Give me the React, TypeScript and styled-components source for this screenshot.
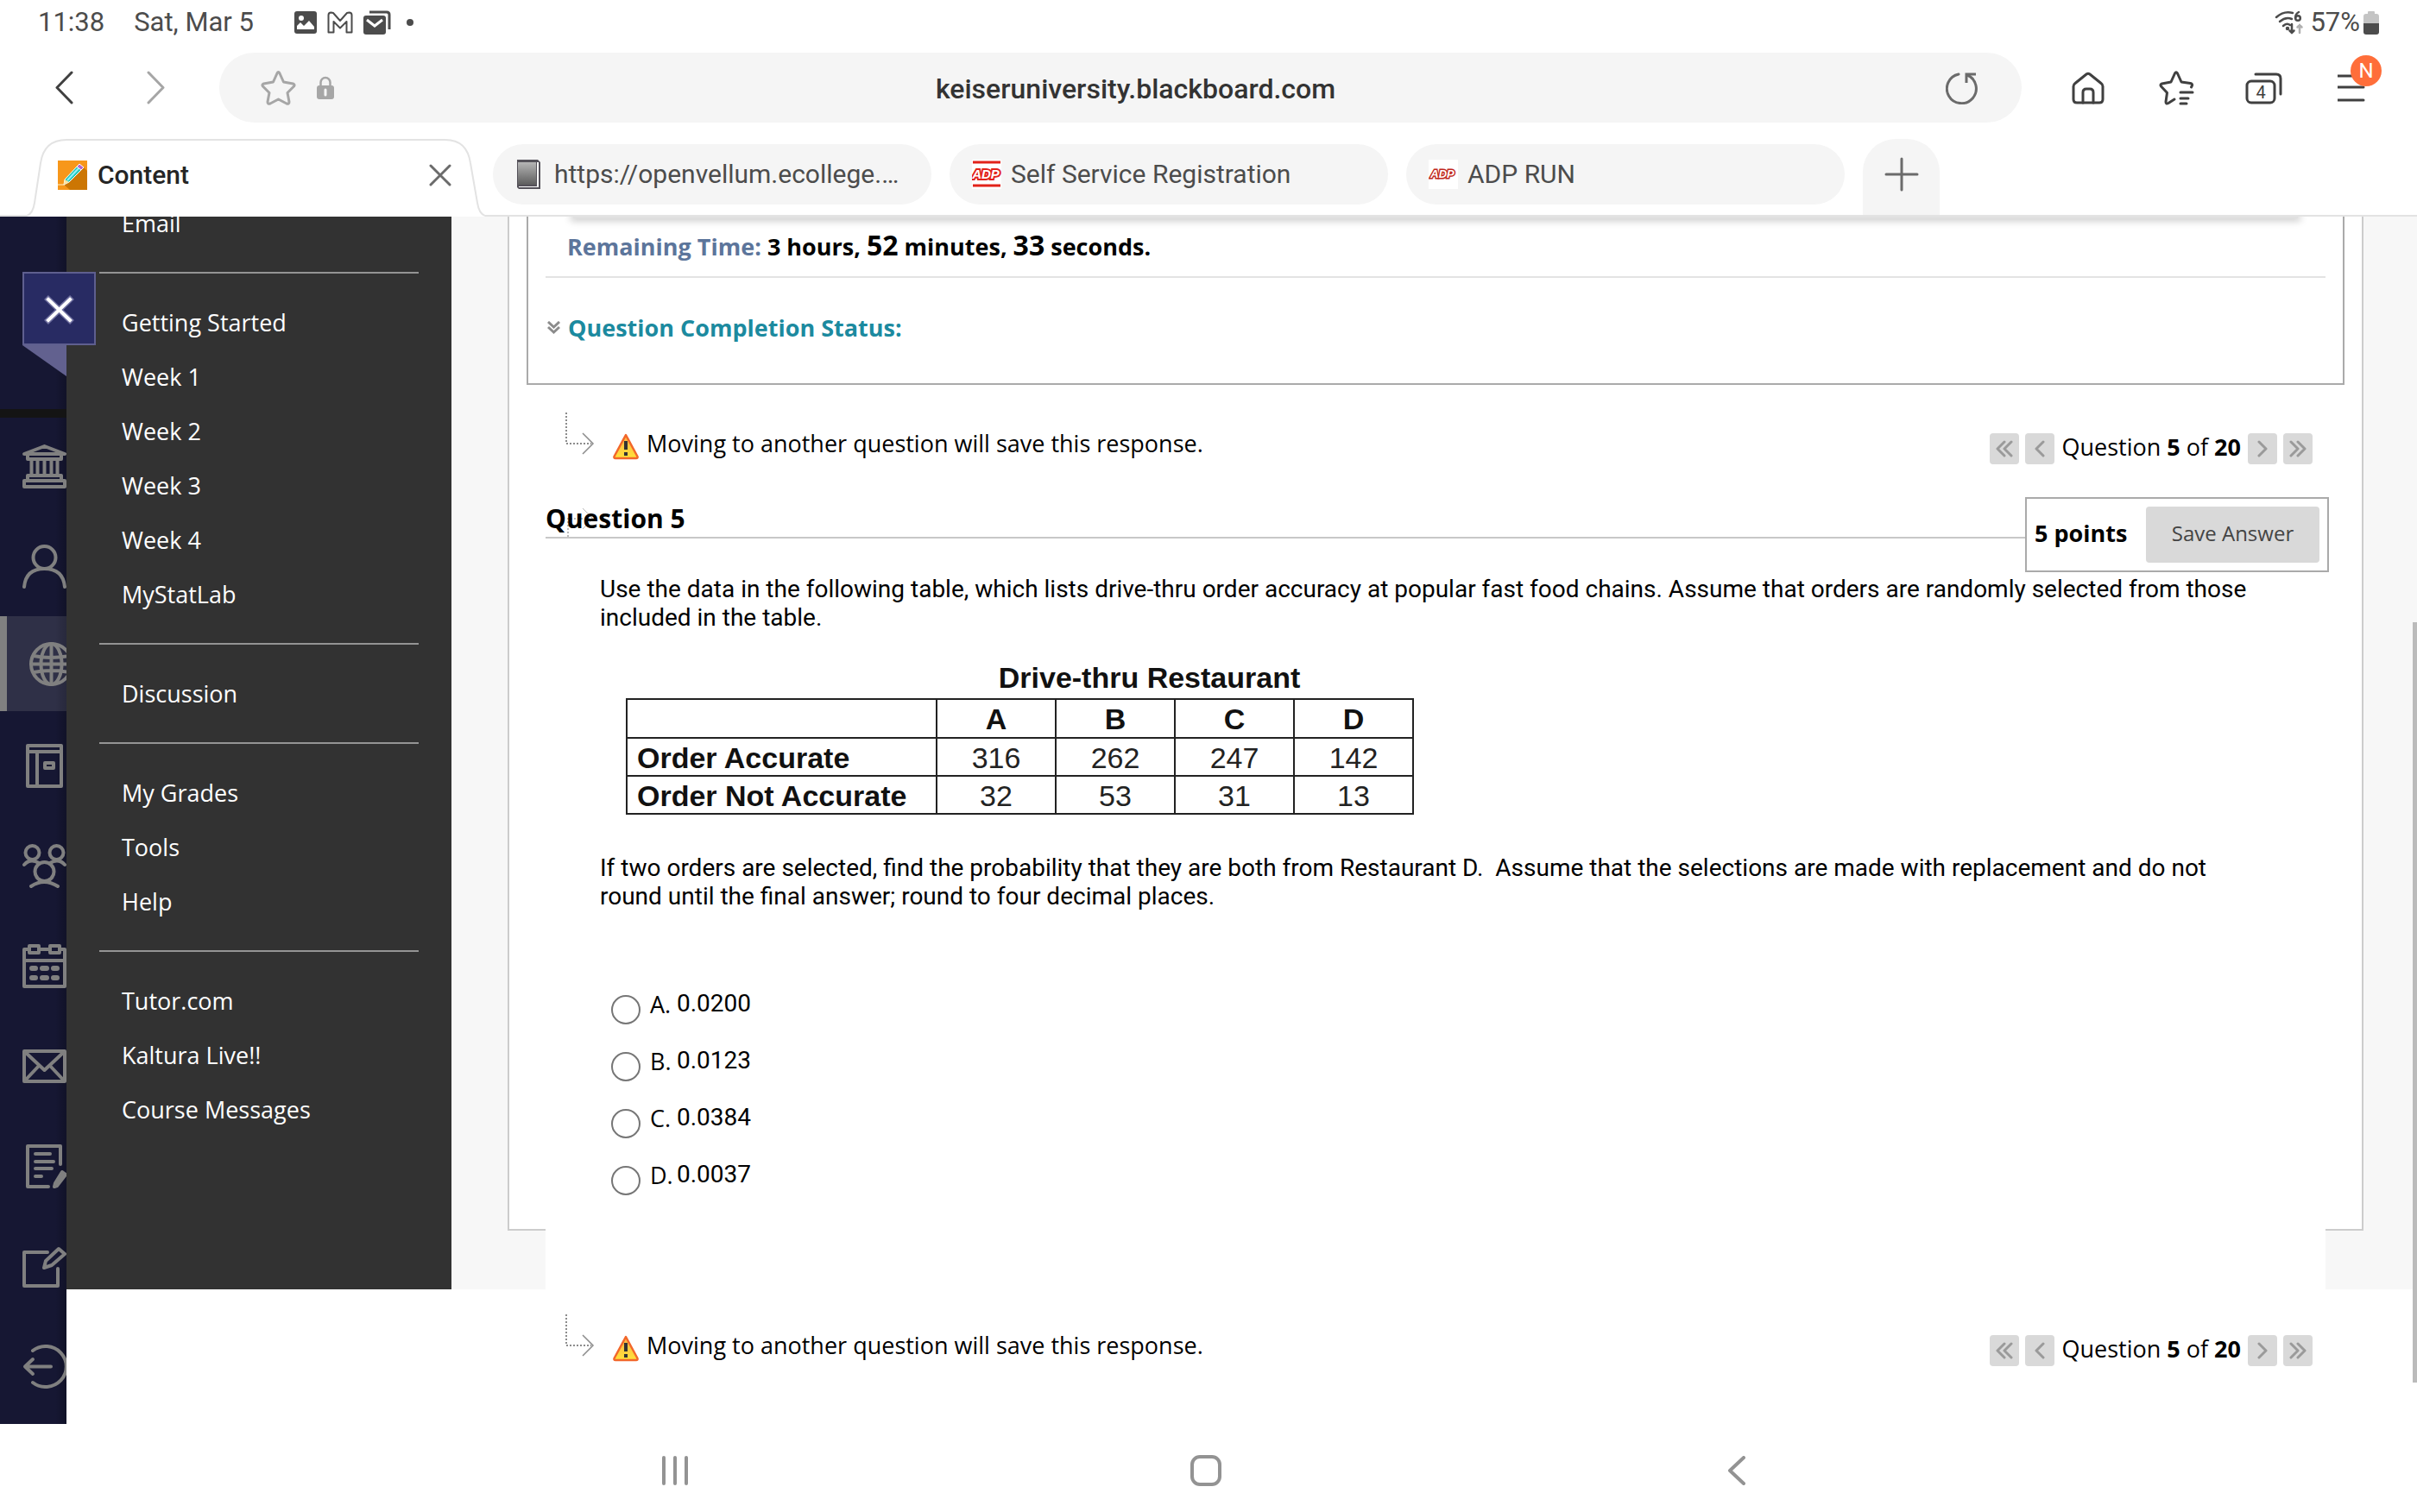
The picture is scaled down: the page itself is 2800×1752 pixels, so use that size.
import React from "react";
import styled, { createGlobalStyle, css } from "styled-components";

const GlobalStyle = createGlobalStyle`
  *, *::before, *::after { box-sizing: border-box; }
  body { margin: 0; background: #fff; color: #000; font-family: "Open Sans", "Noto Sans", sans-serif; }
  button, input { font: inherit; color: inherit; }
  button { border: 0; padding: 0; background: none; }
  a { color: inherit; text-decoration: none; }
  svg { display: block; flex: none; }
`;

const Screen = styled.div`
  display: flex;
  flex-direction: column;
  min-height: 100vh;
  overflow: hidden;
`;

/* ---------- Browser chrome ---------- */

const StatusBar = styled.header`
  display: flex;
  align-items: center;
  justify-content: space-between;
  height: 52px;
  padding: 0 44px;
  color: #4c4c4c;
  font: 400 31px/36px Roboto, sans-serif;
`;

const StatusGroup = styled.div<{ $gap: number }>`
  display: flex;
  align-items: center;
  gap: ${(p) => p.$gap}px;
`;

const StatusDate = styled.span`
  margin: 0 35px 0 22px;
`;

const Toolbar = styled.div`
  display: flex;
  align-items: center;
  padding: 9px 24px 0 21px;
  color: #404040;
`;

const ToolButton = styled.button<{ $width: number; $muted?: boolean }>`
  display: flex;
  align-items: center;
  justify-content: center;
  width: ${(p) => p.$width}px;
  height: 80px;
  color: ${(p) => (p.$muted ? "#a6a6a6" : "#404040")};
`;

const MenuGlyph = styled.span`
  position: relative;
`;

const Badge = styled.span`
  position: absolute;
  top: -22px;
  left: 15px;
  width: 36px;
  height: 36px;
  border-radius: 50%;
  background: #ff6e3a;
  color: #fff;
  font: 400 24px/36px Roboto, sans-serif;
  text-align: center;
`;

const AddressBar = styled.div`
  display: flex;
  flex: 1;
  align-items: center;
  height: 81px;
  margin: 0 26px 0 21px;
  padding: 0 50px 0 48px;
  border-radius: 41px;
  background: #f5f5f5;
  color: #a6a6a6;
`;

const IconButton = styled.button`
  display: flex;
  color: inherit;
`;

const LockMark = styled.span`
  margin-left: 24px;
`;

const AddressInput = styled.input`
  flex: 1;
  min-width: 0;
  margin: 0 10px 0 0;
  padding: 3px 0 0;
  border: 0;
  outline: 0;
  background: none;
  color: #333;
  font: 500 32px/36px Roboto, sans-serif;
  text-align: center;
`;

const ReloadButton = styled(IconButton)`
  color: #6b6b6b;
`;

const TabStrip = styled.div`
  display: flex;
  align-items: flex-end;
  padding: 19px 0 0 31px;
  border-bottom: 2px solid #e3e3e3;
  font: 400 30px/36px Roboto, sans-serif;
`;

const ActiveTab = styled.div`
  position: relative;
  display: flex;
  flex: 0 1 531px;
  align-items: center;
  gap: 13px;
  height: 90px;
  margin-bottom: -2px;
  padding: 0 39px 6px 36px;
  color: #252525;
  font-weight: 500;
`;

const TabOutline = styled.svg`
  position: absolute;
  inset: 0;
  width: 100%;
  height: 100%;
`;

const TabFace = styled.span`
  position: relative;
  display: flex;
  flex: 1;
  align-items: center;
  gap: 12px;
`;

const TabClose = styled(IconButton)`
  position: relative;
  color: #6b6b6b;
`;

const Tab = styled.button`
  display: flex;
  flex: 0 1 508px;
  align-items: center;
  gap: 11px;
  height: 70px;
  margin: 0 12px 12px 9px;
  padding: 0 26px;
  border-radius: 35px;
  background: #f5f5f5;
  color: #4c4c4c;
`;

const TabText = styled.span`
  white-space: nowrap;
`;

const NewTab = styled.button`
  display: flex;
  align-items: center;
  justify-content: center;
  width: 89px;
  height: 88px;
  margin-left: 9px;
  padding-bottom: 6px;
  border-radius: 38px 38px 0 0;
  background: #f5f5f5;
`;

/* ---------- Page ---------- */

const Viewport = styled.div`
  position: relative;
  display: flex;
  overflow: hidden;
`;

const Rail = styled.nav`
  display: flex;
  flex: none;
  flex-direction: column;
  width: 77px;
  overflow: hidden;
  background: linear-gradient(to right, transparent 64px, rgba(0, 0, 0, 0.22)), #161733;
  color: #808080;
`;

const RailHead = styled.div`
  flex: none;
  height: 233px;
  margin-bottom: -2px;
  border-bottom: 10px solid #141414;
`;

const RailLink = styled.a<{ $active?: boolean }>`
  display: flex;
  flex: none;
  align-items: center;
  height: 116px;
  padding-left: 26px;
  ${(p) =>
    p.$active &&
    css`
      height: 110px;
      margin-bottom: 5px;
      border-left: 8px solid #808080;
      background: linear-gradient(to right, transparent 56px, rgba(0, 0, 0, 0.16)), #2f3047;
    `}
`;

const CloseFlag = styled.div`
  position: absolute;
  top: 64px;
  left: 26px;
  z-index: 2;
`;

const CloseCourse = styled.button`
  display: flex;
  align-items: center;
  justify-content: center;
  width: 85px;
  height: 85px;
  border: 2px solid #5f5f8f;
  background: #282b63;
`;

const Column = styled.div`
  flex: 1;
  min-width: 0;
`;

const Course = styled.div`
  display: flex;
`;

const CourseMenu = styled.nav`
  flex: none;
  width: 446px;
  padding: 0 38px;
  background: #323232;
  color: #fff;
`;

const MenuGroup = styled.ul<{ $scrolled?: boolean }>`
  margin: ${(p) => (p.$scrolled ? "-24px" : "0")} 0 0;
  padding: 25px 0 25px 26px;
  padding-top: ${(p) => (p.$scrolled ? "0" : "25px")};
  border-bottom: 2px solid #949494;
  list-style: none;
  &:last-child { border-bottom: 0; }
`;

const MenuLink = styled.a`
  display: block;
  font-size: 27px;
  line-height: 63px;
`;

const Main = styled.main`
  flex: 1;
  min-width: 0;
  padding: 0 62px 68px 65px;
  background: #f7f7f7;
`;

const Panel = styled.div`
  padding: 0 20px;
  border: 2px solid #ccc;
  border-top: 0;
  background: #fff;
`;

const TimerBox = styled.section`
  padding: 0 20px;
  border: 2px solid #aaa;
  border-top: 0;
  font-weight: 700;
  font-size: 27px;
`;

const ShadowEdge = styled.div`
  height: 2px;
  margin: 0 32px;
  background: #e0e0e0;
  box-shadow: 0 0 8px 3px rgba(0, 0, 0, 0.22);
`;

const TimerLine = styled.p`
  margin: 0;
  padding: 14px 0 15px 25px;
  border-bottom: 2px solid #e3e3e3;
  line-height: 38px;
`;

const TimerLabel = styled.span`
  color: #5c759b;
`;

const BigNumber = styled.span`
  font-size: 32px;
  line-height: 1;
`;

const StatusToggle = styled.button`
  display: flex;
  align-items: center;
  gap: 9px;
  margin: 39px 0 45px 2px;
  color: #1c8a9f;
  line-height: 38px;
`;

const Content = styled.div`
  position: relative;
  margin: 0 22px -70px;
  padding: 32px 0 93px;
  background: #fff;
`;

const SaveRow = styled.div`
  display: flex;
  align-items: flex-end;
  padding: 0 15px 0 23px;
  font-size: 27px;
`;

const WarnSlot = styled.span`
  margin: 0 8px 7px 20px;
`;

const WarnText = styled.p`
  flex: 1;
  margin: 0;
  line-height: 52px;
`;

const Pager = styled.div`
  display: flex;
  gap: 7px;
  margin-bottom: 2px;
  line-height: 32px;
`;

const PagerButton = styled.button`
  display: flex;
  align-items: center;
  justify-content: center;
  width: 34px;
  height: 36px;
  border-radius: 4px;
  background: #d9d9d9;
  color: #9a9a9a;
`;

const PagerText = styled.span`
  padding: 0 1px;
  white-space: nowrap;
`;

const QuestionHead = styled.div`
  position: relative;
  display: flex;
  align-items: flex-start;
  margin: 36px -4px 3px 0;
`;

const QuestionTitle = styled.h3`
  position: relative;
  flex: 1;
  height: 48px;
  margin: 0;
  padding-top: 4px;
  border-bottom: 2px solid #c8c8c8;
  font-weight: 700;
  font-size: 30px;
  line-height: 42px;
`;

const TitleElbow = styled.svg`
  position: absolute;
  top: 10px;
  left: 25px;
`;

const TitleText = styled.span`
  position: relative;
`;

const PointsBox = styled.div`
  display: flex;
  align-items: center;
  justify-content: space-between;
  width: 352px;
  height: 87px;
  padding: 0 9px;
  border: 2px solid #aaa;
  font-weight: 700;
  font-size: 27px;
`;

const Points = styled.span`
  padding-bottom: 4px;
`;

const SaveButton = styled.button`
  width: 201px;
  height: 65px;
  padding-bottom: 4px;
  border-radius: 4px;
  background: #d9d9d9;
  color: #444;
  font-weight: 400;
  font-size: 24px;
`;

const Body = styled.div`
  padding: 0 70px 0 63px;
  font: 400 28px/33px Roboto, sans-serif;
`;

const Paragraph = styled.p`
  margin: 0;
`;

const DataTable = styled.table`
  width: 913px;
  margin: 33px 0 45px 30px;
  border-collapse: collapse;
  table-layout: fixed;
  font: 400 34px/40px "Liberation Sans", Arial, sans-serif;
  color: #222;
`;

const Caption = styled.caption`
  padding: 0 0 4px 300px;
  color: #111;
  font-weight: 700;
`;

const LabelCol = styled.col`
  width: 359px;
`;

const Cell = styled.td`
  height: 44px;
  padding: 1px 0 0;
  border: 2px solid #222;
  text-align: center;
`;

const HeadCell = styled(Cell).attrs({ as: "th" })<{ $left?: boolean }>`
  padding-left: ${(p) => (p.$left ? "11px" : "0")};
  color: #111;
  text-align: ${(p) => (p.$left ? "left" : "center")};
  white-space: nowrap;
`;

const HeadRow = styled.tr`
  height: 45px;
`;

const Answers = styled.fieldset`
  margin: 82px 0 0;
  padding: 0 0 0 13px;
  border: 0;
`;

const Answer = styled.label`
  display: flex;
  align-items: flex-start;
  height: 66px;
`;

const Radio = styled.input`
  appearance: none;
  flex: none;
  width: 34px;
  height: 34px;
  margin: 16px 11px 0 0;
  border: 2px solid #767676;
  border-radius: 50%;
  background: #fff;
`;

const Letter = styled.span`
  width: 31px;
  padding-top: 11px;
  font: 400 27px/32px "Open Sans", sans-serif;
  white-space: nowrap;
`;

const Value = styled.span`
  padding-top: 10px;
  line-height: 32px;
`;

const FootRow = styled.div`
  padding: 29px 106px 65px 555px;
`;

const ScrollThumb = styled.div`
  position: absolute;
  top: 33.6%;
  right: 0;
  width: 5px;
  height: 63%;
  background: #bbb;
`;

const SystemNav = styled.nav`
  display: flex;
  flex: 1;
  align-items: center;
  justify-content: center;
  min-height: 102px;
  padding: 5px 6px 0 0;
`;

const SystemButton = styled.button`
  display: flex;
  justify-content: center;
  width: 22%;
  color: #939393;
`;

/* ---------- Icons ---------- */

type LineProps = { w: number; h: number; sw?: number; children: React.ReactNode };

const Line = ({ w, h, sw = 3, children }: LineProps) => (
  <svg width={w} height={h} viewBox={`0 0 ${w} ${h}`} fill="none" stroke="currentColor" strokeWidth={sw} strokeLinecap="round" strokeLinejoin="round" aria-hidden="true">
    {children}
  </svg>
);

const PictureIcon = () => (
  <svg width="26" height="26" viewBox="0 0 26 26" aria-hidden="true">
    <rect width="26" height="26" rx="3" fill="#4c4c4c" />
    <circle cx="8" cy="8" r="3" fill="#fff" />
    <path d="M3 21v-4l4-4 4 4 6-6 6 7v3z" fill="#fff" />
  </svg>
);

const GmailIcon = () => (
  <Line w={30} h={26} sw={2}>
    <path d="M1.500 4.500 Q1.500 1.500 4.500 1.500 L7 2 15 11 23 2 25.500 1.500 Q28.500 1.500 28.500 4.500 V24.500 H22.500 V12 L15 19.500 7.500 12 V24.500 H1.500 Z" />
  </Line>
);

const MailStackIcon = () => (
  <svg width="32" height="28" viewBox="0 0 32 28" aria-hidden="true">
    <path d="M7 2 H27 Q30 2 30 5 V22" fill="none" stroke="#4c4c4c" strokeWidth="3" />
    <rect y="6" width="26" height="22" rx="3" fill="#4c4c4c" />
    <path d="M4 11 L13 18 22 11" fill="none" stroke="#fff" strokeWidth="3" />
  </svg>
);

const DotIcon = () => (
  <svg width="14" height="8" viewBox="0 0 14 8" aria-hidden="true"><circle cx="10" cy="4" r="4" fill="#4c4c4c" /></svg>
);

const WifiIcon = () => (
  <svg width="34" height="28" viewBox="0 0 34 28" fill="none" stroke="#4c4c4c" strokeWidth="2.500" strokeLinecap="round" aria-hidden="true">
    <path d="M2 8 Q11 0 21 3" />
    <path d="M6 13 Q13 7 20 10" />
    <path d="M10 18 Q14 14 18 17" />
    <circle cx="15" cy="21" r="1" fill="#4c4c4c" />
    <path d="M28 2 Q24 4 24 9" />
    <circle cx="27" cy="9" r="2.800" />
    <path d="M20 16 V26 M17.500 23.500 L20 26 22.500 23.500" />
    <path d="M29 26 V17 M26.500 19.500 L29 17 31.500 19.500" stroke="#b0b0b0" />
  </svg>
);

const BatteryIcon = () => (
  <svg width="18" height="27" viewBox="0 0 18 27" aria-hidden="true">
    <path d="M5 1 Q5 0 6 0 H12 Q13 0 13 1 V3 H15 Q18 3 18 6 V15 H0 V6 Q0 3 3 3 H5 Z" fill="#c4c4c4" />
    <path d="M0 14 H18 V24 Q18 27 15 27 H3 Q0 27 0 24 Z" fill="#4c4c4c" />
  </svg>
);

const StarIcon = () => (
  <Line w={41} h={40}>
    <path d="M19 3 Q20.500 0 22 3 L26.500 13 37.500 15 Q40 16 38.500 18 L31 25.500 33 36 Q33 39 30 38 L20.500 33 11 38 Q8 39 8 36 L10 25.500 2.500 18 Q1 16 3.500 15 L14.500 13 Z" />
  </Line>
);

const LockIcon = () => (
  <svg width="20" height="27" viewBox="0 0 20 27" aria-hidden="true">
    <path d="M4.500 12 V7.500 a5.500 5.500 0 0 1 11 0 V12" fill="none" stroke="#a6a6a6" strokeWidth="2.500" />
    <rect y="11" width="20" height="16" rx="3" fill="#a6a6a6" />
    <path d="M10 16 V22" stroke="#f5f5f5" strokeWidth="3" strokeLinecap="round" />
  </svg>
);

const ReloadIcon = () => (
  <Line w={38} h={38}>
    <path d="M15 3 A17 17 0 1 0 25 4" />
    <path d="M35 3 H24 V13" strokeLinecap="butt" strokeLinejoin="miter" />
  </Line>
);

const HomeIcon = () => (
  <Line w={38} h={38}>
    <path d="M2 17 Q2 15 4 13.500 L17 3 Q19 1.500 21 3 L34 13.500 Q36 15 36 17 V32 Q36 36 32 36 H6 Q2 36 2 32 Z" />
    <path d="M13 36 V24 Q13 20 17 20 H21 Q25 20 25 24 V36" />
  </Line>
);

const StarListIcon = () => (
  <Line w={41} h={40}>
    <path d="M37.500 19 L38.500 17 Q39 15 36.500 14.500 L26 13 21.500 3 Q20 0.500 18.500 3 L14 13 3.500 15 Q1 16 2.500 18 L9.500 25.500 8 36 Q8 39 11 37.500 L18 33" />
    <path d="M25 25 H39 M25 32 H34 M25 38 H32" />
  </Line>
);

const TabsIcon = () => (
  <svg width="44" height="38" viewBox="0 0 44 38" fill="none" stroke="#404040" strokeWidth="3" strokeLinecap="round" aria-hidden="true">
    <rect x="2" y="11" width="32" height="25" rx="5" />
    <path d="M12 3 H36 Q41 3 41 8 V26" />
    <text x="18" y="31" fill="#404040" stroke="none" textAnchor="middle" fontFamily="Roboto, sans-serif" fontSize="20">4</text>
  </svg>
);

const MenuIcon = () => (
  <Line w={34} h={32}>
    <path d="M0 2 H30 M0 15 H30 M0 30 H30" />
  </Line>
);

const Chevron = ({ w, h, left, sw = 3 }: { w: number; h: number; left?: boolean; sw?: number }) => (
  <Line w={w} h={h} sw={sw}>
    <path d={left ? `M${w - 2} 2 L2 ${h / 2} ${w - 2} ${h - 2}` : `M2 2 L${w - 2} ${h / 2} 2 ${h - 2}`} />
  </Line>
);

const DoubleChevron = ({ left }: { left?: boolean }) => (
  <Line w={20} h={20} sw={3}>
    <path d={left ? "M10 2 L2 10 10 18 M18 2 L10 10 18 18" : "M2 2 L10 10 2 18 M10 2 L18 10 10 18"} />
  </Line>
);

const PencilFavicon = () => (
  <svg width="34" height="34" viewBox="0 0 34 34" aria-hidden="true">
    <rect width="34" height="34" fill="#f7971a" />
    <path d="M30 8 L34 12 V34 H14 L7 28 Z" fill="#cc7603" />
    <path d="M0 28 H8" stroke="#fff3c9" />
    <path d="M7 28 L8 22 23 6 28 10 13 25 Z" fill="#24c7b4" stroke="#fff" />
    <path d="M11 23 L25 8" stroke="#8ff0ff" strokeWidth="2" />
    <path d="M7 28 L8 22 13 25 Z" fill="#ffe3a1" />
    <path d="M22 7 L25 4 30 8 27 11 Z" fill="#b467c8" stroke="#fff" />
  </svg>
);

const BookFavicon = () => (
  <svg width="34" height="34" viewBox="0 0 34 34" aria-hidden="true">
    <defs>
      <linearGradient id="cover" x1="0" y1="0" x2="0" y2="1">
        <stop offset="0" stopColor="#b5b5b5" />
        <stop offset="1" stopColor="#5e5e5e" />
      </linearGradient>
    </defs>
    <path d="M2 0 H26 L29 3 V34 H4 L2 32 Z" fill="#55525a" />
    <path d="M4 31 H25 V3 H27 V32 H4 Z" fill="#fff" />
    <path d="M3 3 H24 V29 H3 Z" fill="url(#cover)" />
  </svg>
);

const AdpFavicon = ({ bars }: { bars?: boolean }) => (
  <svg width="34" height="34" viewBox="0 0 34 34" aria-hidden="true">
    <rect width="34" height="34" fill="#fff" />
    {bars && <path d="M1 3 H33 M1 30 H33" stroke="#e2231a" strokeWidth="3" />}
    <text
      x="16"
      y={bars ? 22 : 21}
      textAnchor="middle"
      fontFamily="Liberation Sans, Arial, sans-serif"
      fontWeight="700"
      fontStyle="italic"
      fontSize={bars ? 15 : 13}
      fill="#fff"
      stroke={bars ? "#e2231a" : "#c0281c"}
      strokeWidth={bars ? 4 : 3}
      paintOrder="stroke"
    >
      ADP
    </text>
  </svg>
);

const ElbowIcon = () => (
  <svg width="34" height="62" viewBox="0 0 34 62" fill="none" stroke="#8c8c8c" strokeWidth="2" aria-hidden="true">
    <path d="M1 0 V36 H30" strokeDasharray="2 2" />
    <path d="M20 24 L32 36 20 48" strokeWidth="1.500" />
  </svg>
);

const WarningIcon = () => (
  <svg width="32" height="32" viewBox="0 0 32 32" aria-hidden="true">
    <defs>
      <linearGradient id="warn" x1="0" y1="0" x2="0" y2="1">
        <stop offset="0" stopColor="#ffb347" />
        <stop offset="1" stopColor="#ffe23a" />
      </linearGradient>
    </defs>
    <path d="M16 3 L29.500 28 Q30 30 28 30 H4 Q2 30 2.500 28 Z" fill="url(#warn)" stroke="#f2672a" strokeWidth="2.500" strokeLinejoin="round" />
    <path d="M16 10 V20" stroke="#333" strokeWidth="4" />
    <path d="M16 23 V27" stroke="#333" strokeWidth="4" />
  </svg>
);

const railIcons: { label: string; active?: boolean; art: React.ReactNode }[] = [
  {
    label: "Institution",
    art: (
      <>
        <path d="M2 11 L25.500 2 49 11 Z M6 12 V17 H45 V12" />
        <path d="M10.500 18 V34 M17.500 18 V34 M25.500 18 V34 M33.500 18 V34 M40.500 18 V34" />
        <path d="M6 40 V36 H45 V40 M2 49 V42 H49 V49 Z" />
      </>
    ),
  },
  {
    label: "Profile",
    art: (
      <>
        <ellipse cx="25.500" cy="15" rx="13" ry="13" />
        <path d="M2 49 Q4 28 25.500 28 Q47 28 49 49" />
      </>
    ),
  },
  {
    label: "Courses",
    active: true,
    art: (
      <>
        <circle cx="25.500" cy="25.500" r="23.500" />
        <ellipse cx="25.500" cy="25.500" rx="12" ry="23.500" />
        <path d="M25.500 2 V49 M2 25.500 H49 M5 16 Q25 20 46 16 M5 35 Q25 31 46 35" />
      </>
    ),
  },
  {
    label: "Organizations",
    art: (
      <>
        <path d="M6 2 H45 M45 2 V9 M6 9 H45 V49 H6 V2 M17 9 V49" />
        <path d="M26 22 H36 V28 H26 Z" />
      </>
    ),
  },
  {
    label: "Groups",
    art: (
      <>
        <circle cx="11.500" cy="10" r="8" />
        <circle cx="39.500" cy="10" r="8" />
        <circle cx="25.500" cy="32" r="11" />
        <path d="M2 24 Q9 16 19 22 M49 24 Q42 16 32 22 M10 49 Q25 39 41 49" />
      </>
    ),
  },
  {
    label: "Calendar",
    art: (
      <>
        <path d="M8 6 H2 V49 H49 V6 H43 M20 6 H31 M2 19 H49" />
        <path d="M8 2 H19 V10 H8 Z M32 2 H43 V10 H32 Z" />
        <path d="M11 28 H15 M23 28 H28 M36 28 H40 M11 39 H15 M23 39 H28 M36 39 H40" strokeWidth="6" />
      </>
    ),
  },
  {
    label: "Messages",
    art: <path d="M2 8 H49 V43 H2 Z M3 9 L25.500 30 48 9 M3 42 L19 25 M48 42 L32 25" />,
  },
  {
    label: "Grades",
    art: (
      <>
        <path d="M44 23 V2 H6 V49 H30 M15 11 H32 M15 20 H36 M15 28 H34 M15 37 H22" />
        <path d="M46 32 L50 35 40 48 37 49 38 45 Z" fill="currentColor" />
      </>
    ),
  },
  {
    label: "Assist",
    art: (
      <>
        <path d="M29 9 H2 V48 H41 V28" />
        <path d="M42 5 L49 11 34 24 25 27 27 19 Z" />
      </>
    ),
  },
  {
    label: "Sign out",
    art: (
      <>
        <path d="M12 7 A24 23.500 0 1 1 12 44" />
        <path d="M33 25.500 H3 M12 17 L3 25.500 12 34" />
      </>
    ),
  },
];

/* ---------- Data ---------- */

const menu = [
  ["Email"],
  ["Getting Started", "Week 1", "Week 2", "Week 3", "Week 4", "MyStatLab"],
  ["Discussion"],
  ["My Grades", "Tools", "Help"],
  ["Tutor.com", "Kaltura Live!!", "Course Messages"],
];

const columns = ["A", "B", "C", "D"];
const rows = [
  { label: "Order Accurate", values: [316, 262, 247, 142] },
  { label: "Order Not Accurate", values: [32, 53, 31, 13] },
];

const answers = [
  ["A.", "0.0200"],
  ["B.", "0.0123"],
  ["C.", "0.0384"],
  ["D.", "0.0037"],
];

const SaveNotice = () => (
  <SaveRow>
    <ElbowIcon />
    <WarnSlot><WarningIcon /></WarnSlot>
    <WarnText>Moving to another question will save this response.</WarnText>
    <Pager>
      <PagerButton aria-label="First question"><DoubleChevron left /></PagerButton>
      <PagerButton aria-label="Previous question"><Chevron w={12} h={20} left /></PagerButton>
      <PagerText>Question <b>5</b> of <b>20</b></PagerText>
      <PagerButton aria-label="Next question"><Chevron w={12} h={20} /></PagerButton>
      <PagerButton aria-label="Last question"><DoubleChevron /></PagerButton>
    </Pager>
  </SaveRow>
);

export default function App() {
  return (
    <Screen>
      <GlobalStyle />
      <StatusBar>
        <StatusGroup $gap={12}>
          <span>11:38</span>
          <StatusDate>Sat, Mar 5</StatusDate>
          <PictureIcon />
          <GmailIcon />
          <MailStackIcon />
          <DotIcon />
        </StatusGroup>
        <StatusGroup $gap={7}>
          <WifiIcon />
          <StatusGroup $gap={4}>
            <span>57%</span>
            <BatteryIcon />
          </StatusGroup>
        </StatusGroup>
      </StatusBar>

      <Toolbar>
        <ToolButton $width={106} aria-label="Back"><Chevron w={21} h={39} left /></ToolButton>
        <ToolButton $width={106} $muted aria-label="Forward"><Chevron w={21} h={39} /></ToolButton>
        <AddressBar>
          <IconButton aria-label="Add bookmark"><StarIcon /></IconButton>
          <LockMark><LockIcon /></LockMark>
          <AddressInput aria-label="Address" defaultValue="keiseruniversity.blackboard.com" />
          <ReloadButton aria-label="Reload"><ReloadIcon /></ReloadButton>
        </AddressBar>
        <ToolButton $width={102} aria-label="Home"><HomeIcon /></ToolButton>
        <ToolButton $width={102} aria-label="Bookmarks"><StarListIcon /></ToolButton>
        <ToolButton $width={102} aria-label="Tabs"><TabsIcon /></ToolButton>
        <ToolButton $width={102} aria-label="Menu">
          <MenuGlyph>
            <MenuIcon />
            <Badge>N</Badge>
          </MenuGlyph>
        </ToolButton>
      </Toolbar>

      <TabStrip>
        <ActiveTab>
          <TabOutline viewBox="0 0 531 90" preserveAspectRatio="none" aria-hidden="true">
            <path d="M0 89 Q7 87 9 74 L16 28 Q20 1 46 1 H485 Q510 1 514 28 L522 74 Q524 87 531 89 V90 H0 Z" fill="#fff" />
            <path d="M0 89 Q7 87 9 74 L16 28 Q20 1 46 1 H485 Q510 1 514 28 L522 74 Q524 87 531 89" fill="none" stroke="#e3e3e3" strokeWidth="2" />
          </TabOutline>
          <TabFace><PencilFavicon />Content</TabFace>
          <TabClose aria-label="Close tab"><Line w={26} h={26}><path d="M2 2 L24 24 M24 2 L2 24" /></Line></TabClose>
        </ActiveTab>
        <Tab><BookFavicon /><TabText>https://openvellum.ecollege.…</TabText></Tab>
        <Tab><AdpFavicon bars /><TabText>Self Service Registration</TabText></Tab>
        <Tab><AdpFavicon /><TabText>ADP RUN</TabText></Tab>
        <NewTab aria-label="New tab"><Line w={40} h={40}><path d="M20 2 V38 M2 20 H38" stroke="#6b6b6b" /></Line></NewTab>
      </TabStrip>

      <Viewport>
        <Rail aria-label="Blackboard">
          <RailHead />
          {railIcons.map((item) => (
            <RailLink key={item.label} href="#" $active={item.active} aria-label={item.label}>
              <Line w={51} h={51} sw={4}>{item.art}</Line>
            </RailLink>
          ))}
        </Rail>
        <CloseFlag>
          <CloseCourse aria-label="Close course">
            <svg width="36" height="36" viewBox="0 0 36 36" fill="none" strokeLinecap="square" aria-hidden="true">
              <path d="M5 7 L30 31 M30 7 L5 31" stroke="#6f70a0" strokeWidth="7" />
              <path d="M5 7 L30 31 M30 7 L5 31" stroke="#fff" strokeWidth="4" />
            </svg>
          </CloseCourse>
          <svg width="51" height="36" viewBox="0 0 51 36" aria-hidden="true"><path d="M0 0 H51 V36 Z" fill="#62618f" /></svg>
        </CloseFlag>

        <Column>
          <Course>
            <CourseMenu aria-label="Course">
              {menu.map((group, i) => (
                <MenuGroup key={group[0]} $scrolled={i === 0}>
                  {group.map((item) => (
                    <li key={item}><MenuLink href="#">{item}</MenuLink></li>
                  ))}
                </MenuGroup>
              ))}
            </CourseMenu>

            <Main>
              <Panel>
                <TimerBox>
                  <ShadowEdge />
                  <TimerLine>
                    <TimerLabel>Remaining Time:</TimerLabel> 3 hours, <BigNumber>52</BigNumber> minutes, <BigNumber>33</BigNumber> seconds.
                  </TimerLine>
                  <StatusToggle>
                    <svg width="15" height="16" viewBox="0 0 15 16" fill="none" stroke="#8c8c8c" strokeWidth="3" aria-hidden="true">
                      <path d="M1 1 L7.500 7 14 1 M1 7 L7.500 13 14 7" />
                    </svg>
                    Question Completion Status:
                  </StatusToggle>
                </TimerBox>

                <Content>
                  <SaveNotice />
                  <QuestionHead>
                    <QuestionTitle>
                      <TitleElbow width="32" height="36" viewBox="0 0 32 36" fill="none" stroke="#bbb" aria-hidden="true">
                        <path d="M1 36 V15 H30" strokeWidth="2" strokeDasharray="2 2" />
                        <path d="M18 3 L30 15 18 27" />
                      </TitleElbow>
                      <TitleText>Question 5</TitleText>
                    </QuestionTitle>
                    <PointsBox>
                      <Points>5 points</Points>
                      <SaveButton>Save Answer</SaveButton>
                    </PointsBox>
                  </QuestionHead>

                  <Body>
                    <Paragraph>
                      Use the data in the following table, which lists drive-thru order accuracy at popular fast food chains. Assume that orders are randomly selected from those included in the table.
                    </Paragraph>
                    <DataTable>
                      <Caption>Drive-thru Restaurant</Caption>
                      <colgroup>
                        <LabelCol />
                        <col span={4} />
                      </colgroup>
                      <thead>
                        <HeadRow>
                          <Cell />
                          {columns.map((c) => <HeadCell key={c}>{c}</HeadCell>)}
                        </HeadRow>
                      </thead>
                      <tbody>
                        {rows.map((row) => (
                          <tr key={row.label}>
                            <HeadCell $left>{row.label}</HeadCell>
                            {row.values.map((v) => <Cell key={v}>{v}</Cell>)}
                          </tr>
                        ))}
                      </tbody>
                    </DataTable>
                    <Paragraph>
                      If two orders are selected, find the probability that they are both from Restaurant D.&nbsp; Assume that the selections are made with replacement and do not round until the final answer; round to four decimal places.
                    </Paragraph>
                    <Answers>
                      {answers.map(([letter, value]) => (
                        <Answer key={letter}>
                          <Radio type="radio" name="answer" />
                          <Letter>{letter}</Letter>
                          <Value>{value}</Value>
                        </Answer>
                      ))}
                    </Answers>
                  </Body>
                </Content>
              </Panel>
            </Main>
          </Course>
          <FootRow><SaveNotice /></FootRow>
        </Column>
        <ScrollThumb />
      </Viewport>

      <SystemNav aria-label="System">
        <SystemButton aria-label="Recent apps"><Line w={31} h={34} sw={4}><path d="M2 2 V32 M15 2 V32 M28 2 V32" /></Line></SystemButton>
        <SystemButton aria-label="Home screen"><Line w={36} h={36} sw={4}><rect x="2" y="2" width="32" height="32" rx="9" /></Line></SystemButton>
        <SystemButton aria-label="Go back"><Chevron w={20} h={34} sw={4} left /></SystemButton>
      </SystemNav>
    </Screen>
  );
}
